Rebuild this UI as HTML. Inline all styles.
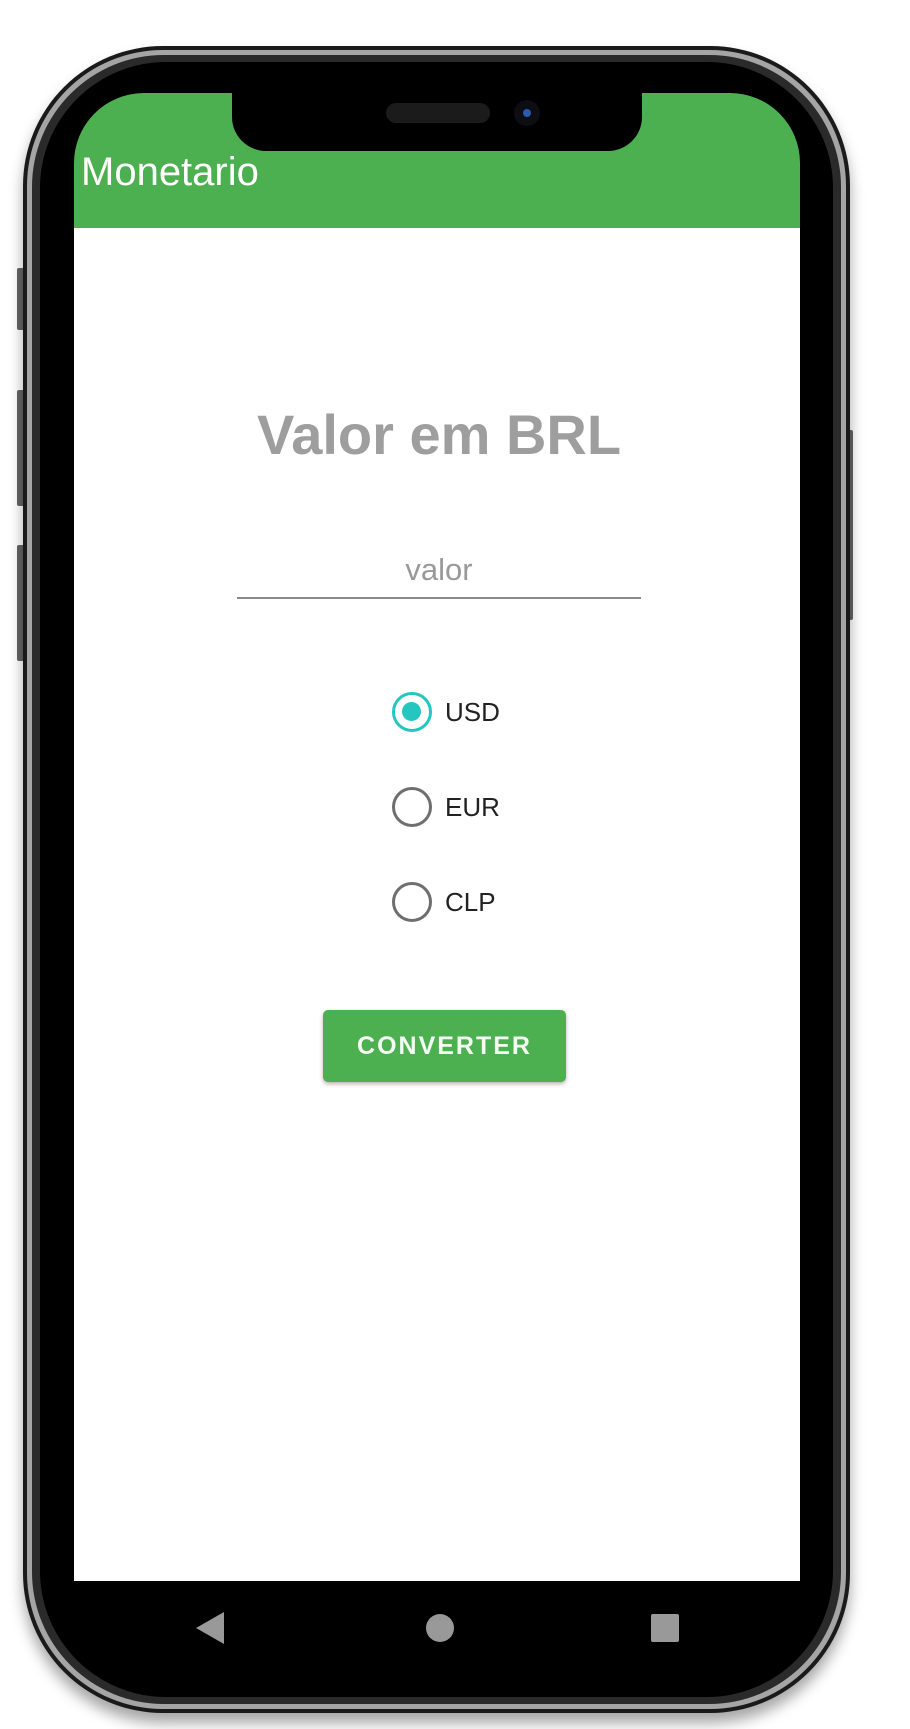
<!DOCTYPE html>
<html><head><meta charset="utf-8"><style>
*{margin:0;padding:0;box-sizing:border-box}
body{width:910px;height:1729px;background:#fff;position:relative;overflow:hidden;font-family:"Liberation Sans",sans-serif}
.abs{position:absolute}
.btn{background:#666;border-radius:2px}
</style></head><body>
<div class="abs btn" style="left:17px;top:268px;width:8px;height:62px"></div>
<div class="abs btn" style="left:17px;top:390px;width:8px;height:116px"></div>
<div class="abs btn" style="left:17px;top:545px;width:8px;height:116px"></div>
<div class="abs btn" style="left:845px;top:430px;width:8px;height:190px"></div>
<div class="abs" style="left:23px;top:46px;width:827px;height:1667px;border-radius:140px;background:#1a1a1a;box-shadow:0 10px 14px rgba(0,0,0,.35)"></div>
<div class="abs" style="left:27px;top:50px;width:819px;height:1659px;border-radius:136px;background:#a5a5a5"></div>
<div class="abs" style="left:32px;top:55px;width:809px;height:1649px;border-radius:132px;background:#2a2a2a"></div>
<div class="abs" style="left:40px;top:62px;width:793px;height:1635px;border-radius:126px;background:#000"></div>
<div class="abs" style="left:74px;top:93px;width:726px;height:1587px;border-radius:70px 70px 60px 60px;background:#000;overflow:hidden">
  <div class="abs" style="left:0;top:0;width:726px;height:135px;background:#4caf50"></div>
  <div class="abs" style="left:0;top:135px;width:726px;height:1353px;background:#fff"></div>
  <div class="abs" style="left:158px;top:-5px;width:410px;height:63px;background:#000;border-radius:0 0 34px 34px"></div>
  <div class="abs" style="left:312px;top:10px;width:104px;height:20px;border-radius:10px;background:#1b1b1b"></div>
  <div class="abs" style="left:440px;top:7px;width:26px;height:26px;border-radius:50%;background:#0d0d14"><div class="abs" style="left:9px;top:9px;width:8px;height:8px;border-radius:50%;background:#2a5bb0"></div></div>
  <div class="abs" style="left:7px;top:57px;color:#fff;font-size:40px">Monetario</div>
</div>
<div class="abs" style="left:0;width:878px;top:402px;text-align:center;font-size:56px;font-weight:bold;color:#9e9e9e">Valor em BRL</div>
<div class="abs" style="left:237px;width:404px;top:552px;text-align:center;font-size:31px;color:#999">valor</div>
<div class="abs" style="left:237px;width:404px;top:597px;height:2px;background:#8a8a8a"></div>
<div class="abs" style="left:392px;top:692px;width:40px;height:40px;border-radius:50%;border:3.5px solid #26c6c0"><div class="abs" style="left:7px;top:7px;width:19px;height:19px;border-radius:50%;background:#26c6c0"></div></div>
<div class="abs" style="left:445px;top:697px;font-size:26px;color:#222">USD</div>
<div class="abs" style="left:392px;top:787px;width:40px;height:40px;border-radius:50%;border:3.5px solid #6e6e6e"></div>
<div class="abs" style="left:445px;top:792px;font-size:26px;color:#222">EUR</div>
<div class="abs" style="left:392px;top:882px;width:40px;height:40px;border-radius:50%;border:3.5px solid #6e6e6e"></div>
<div class="abs" style="left:445px;top:887px;font-size:26px;color:#222">CLP</div>
<div class="abs" style="left:323px;top:1010px;width:243px;height:72px;background:#4caf50;border-radius:5px;box-shadow:0 2px 4px rgba(0,0,0,.3);color:#f3fff3;font-size:25px;font-weight:bold;letter-spacing:2px;text-align:center;line-height:72px">CONVERTER</div>
<svg class="abs" style="left:0;top:0" width="910" height="1729">
<polygon points="196,1628 224,1612 224,1644" fill="#999"/>
<ellipse cx="440" cy="1628" rx="14" ry="14" fill="#999"/>
<rect x="651" y="1614" width="28" height="28" rx="2" fill="#999"/>
</svg>
</body></html>
